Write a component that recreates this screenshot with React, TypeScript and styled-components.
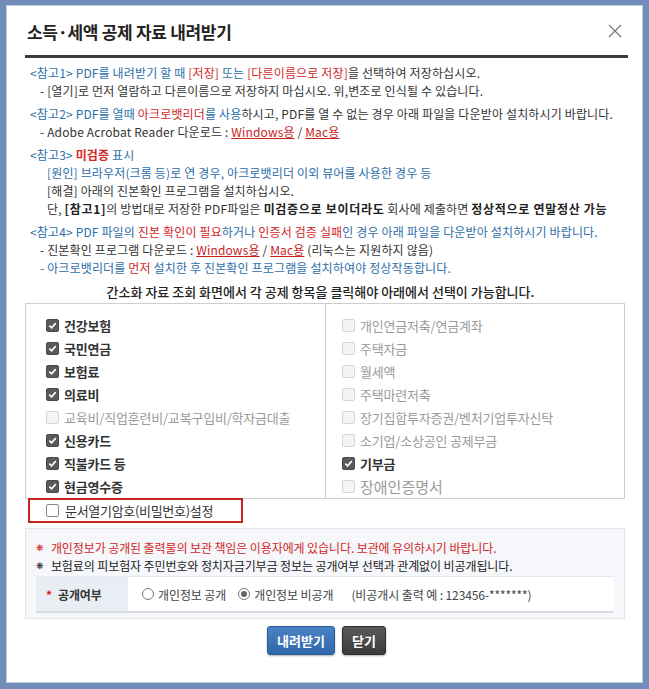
import React from "react";
import styled, { createGlobalStyle } from "styled-components";

const GlobalStyle = createGlobalStyle`
	html, body {
		margin: 0;
		padding: 0;
		background: #6f8cba;
	}
	body {
		font-family: "Noto Sans CJK KR", "Noto Sans", sans-serif;
		color: #333;
	}
`;

const Page = styled.div`
	padding: 5px 6px 6px;
	height: 689px;
	box-sizing: border-box;
`;
const Dialog = styled.div`
	height: 100%;
	box-sizing: border-box;
	background: #fff;
	border: 1px solid #c3cddb;
	padding: 0 14px 0 18px;
	display: flex;
	flex-direction: column;
`;
const Header = styled.div`
	display: flex;
	align-items: center;
	justify-content: space-between;
	height: 48px;
	padding-top: 1px;
	border-bottom: 3px solid #3b3b3b;
`;
const Title = styled.h1`
	margin: 0 0 0 2px;
	font-size: 17px;
	font-weight: 700;
	color: #222;
	letter-spacing: -0.3px;
`;
const Close = styled.button`
	border: 0;
	background: none;
	padding: 0;
	margin-right: 4px;
	width: 16px;
	height: 16px;
	cursor: pointer;
	svg { display: block; }
`;

const Notes = styled.div`
	padding: 6px 0 0 5px;
	font-size: 12px;
	line-height: 18px;
	letter-spacing: 0.15px;
	color: #333;
`;
const Group = styled.div`
	margin-top: 5px;
	&:first-child { margin-top: 0; }
`;
const Line = styled.div<{ $indent?: number }>`
	padding-left: ${(p) => p.$indent ?? 0}px;
	white-space: nowrap;
`;
const Blue = styled.span`
	color: #2c6ea9;
`;
const Red = styled.span<{ $bold?: boolean }>`
	color: #d2261f;
	font-weight: ${(p) => (p.$bold ? 700 : 400)};
`;
const Strong = styled.b`
	font-weight: 700;
	color: #222;
	letter-spacing: 0.7px;
`;
const DocLink = styled.a`
	color: #c8211d;
	text-decoration: underline;
`;

const Guide = styled.p`
	margin: 5px 0 0;
	text-align: center;
	font-size: 13px;
	font-weight: 500;
	color: #222;
	letter-spacing: 0;
	padding-right: 12px;
`;

const Panel = styled.div`
	margin: 2px 3px 0 0;
	display: grid;
	grid-template-columns: 300px 1fr;
	border: 1px solid #cfcfcf;
`;
const Column = styled.ul<{ $left?: boolean }>`
	list-style: none;
	margin: 0;
	padding: 10px 0 0 ${(p) => (p.$left ? 20 : 16)}px;
	border-right: ${(p) => (p.$left ? "1px solid #cfcfcf" : "0")};
`;
const Item = styled.li`
	display: flex;
	align-items: center;
	gap: 5px;
	height: 23px;
`;
const Box = styled.span<{ $checked?: boolean; $disabled?: boolean }>`
	flex: none;
	width: 13px;
	height: 13px;
	box-sizing: border-box;
	border-radius: 2px;
	display: flex;
	align-items: center;
	justify-content: center;
	background: ${(p) => (p.$checked ? "#5a5a5a" : p.$disabled ? "#f4f4f4" : "#fff")};
	border: 1px solid ${(p) => (p.$checked ? "#4a4a4a" : p.$disabled ? "#d6d6d6" : "#8a8a8a")};
	svg { display: block; }
`;
const Label = styled.span<{ $checked?: boolean; $big?: boolean }>`
	font-size: ${(p) => (p.$big ? 15 : 13)}px;
	font-weight: ${(p) => (p.$checked ? 700 : 400)};
	color: ${(p) => (p.$checked ? "#333" : "#9a9a9a")};
	letter-spacing: ${(p) => (p.$big ? "0" : "-0.2px")};
	white-space: nowrap;
`;

const PasswordOption = styled.label`
	align-self: flex-start;
	margin: -1px 0 0 3px;
	width: 215px;
	height: 25px;
	box-sizing: border-box;
	border: 2px solid #c9231f;
	display: flex;
	align-items: center;
	gap: 6px;
	padding-left: 16px;
	font-size: 13px;
	color: #333;
	letter-spacing: -0.3px;
`;

const Privacy = styled.div`
	margin: 5px 3px 0 0;
	background: #f5f7fa;
	border: 1px solid #e2e6ec;
	padding: 10px 10px 5px 10px;
	font-size: 12px;
	letter-spacing: -0.1px;
`;
const Warn = styled.div<{ $red?: boolean }>`
	height: 18px;
	line-height: 18px;
	white-space: nowrap;
	color: ${(p) => (p.$red ? "#d2261f" : "#222")};
	&::before {
		content: "❋";
		display: inline-block;
		vertical-align: top;
		line-height: 18px;
		font-size: 9px;
		margin-right: 7px;
	}
`;
const Row = styled.div`
	margin-top: 1px;
	display: grid;
	grid-template-columns: 92px 1fr;
	border-top: 1px solid #e4e8ef;
	border-bottom: 2px solid #d8dde5;
	height: 34px;
`;
const RowLabel = styled.div`
	background: #e9eef5;
	display: flex;
	align-items: center;
	padding-left: 10px;
	font-weight: 700;
	color: #333;
	span { color: #d2261f; margin-right: 6px; }
`;
const RowValue = styled.div`
	background: #fff;
	display: flex;
	align-items: center;
	padding-left: 14px;
	color: #444;
	font-size: 12px;
	white-space: nowrap;
`;
const Radio = styled.span<{ $on?: boolean }>`
	width: 12px;
	height: 12px;
	box-sizing: border-box;
	border-radius: 50%;
	border: 1px solid #777;
	margin-right: 4px;
	display: inline-flex;
	align-items: center;
	justify-content: center;
	&::after {
		content: "";
		width: 6px;
		height: 6px;
		border-radius: 50%;
		background: ${(p) => (p.$on ? "#666" : "transparent")};
	}
`;
const Choice = styled.span`
	display: inline-flex;
	align-items: center;
	margin-right: 12px;
`;
const Example = styled.span`
	margin-left: 6px;
	letter-spacing: -0.1px;
`;

const Actions = styled.div`
	display: flex;
	justify-content: center;
	gap: 7px;
	margin-top: 7px;
`;
const Button = styled.button<{ $variant?: "primary" | "dark" }>`
	height: 29px;
	padding: 0 9px;
	border-radius: 3px;
	font-family: inherit;
	font-size: 13px;
	font-weight: 700;
	color: #fff;
	cursor: pointer;
	border: 1px solid ${(p) => (p.$variant === "dark" ? "#2e2e2e" : "#2a5d9c")};
	background: ${(p) =>
		p.$variant === "dark"
			? "linear-gradient(#5a5a5a, #3a3a3a)"
			: "linear-gradient(#4a82c4, #2f68ab)"};
	box-shadow: 0 1px 2px rgba(0, 0, 0, 0.3);
`;

const Check = () => (
	<svg width="9" height="9" viewBox="0 0 10 10">
		<path d="M1.5 5.2 L4 7.6 L8.6 2.4" stroke="#fff" strokeWidth="1.8" fill="none" />
	</svg>
);

const left: [string, boolean][] = [
	["건강보험", true],
	["국민연금", true],
	["보험료", true],
	["의료비", true],
	["교육비/직업훈련비/교복구입비/학자금대출", false],
	["신용카드", true],
	["직불카드 등", true],
	["현금영수증", true],
];
const right: [string, boolean][] = [
	["개인연금저축/연금계좌", false],
	["주택자금", false],
	["월세액", false],
	["주택마련저축", false],
	["장기집합투자증권/벤처기업투자신탁", false],
	["소기업/소상공인 공제부금", false],
	["기부금", true],
	["장애인증명서", false],
];

function Options({ items, isLeft }: { items: [string, boolean][]; isLeft?: boolean }) {
	return (
		<Column $left={isLeft}>
			{items.map(([name, on]) => (
				<Item key={name}>
					<Box $checked={on} $disabled={!on}>{on && <Check />}</Box>
					<Label $checked={on} $big={name === "장애인증명서"}>{name}</Label>
				</Item>
			))}
		</Column>
	);
}

export default function App() {
	return (
		<>
			<GlobalStyle />
			<Page>
				<Dialog>
					<Header>
						<Title>소득·세액 공제 자료 내려받기</Title>
						<Close aria-label="닫기">
							<svg width="14" height="14" viewBox="0 0 14 14">
								<path d="M1 1 L13 13 M13 1 L1 13" stroke="#777" strokeWidth="1.2" />
							</svg>
						</Close>
					</Header>

					<Notes>
						<Group>
							<Line>
								<Blue>&lt;참고1&gt; PDF를 내려받기 할 때 </Blue>
								<Red>[저장]</Red>
								<Blue> 또는 </Blue>
								<Red>[다른이름으로 저장]</Red>을 선택하여 저장하십시오.
							</Line>
							<Line $indent={10}>
								- [열기]로 먼저 열람하고 다른이름으로 저장하지 마십시오. 위,변조로 인식될 수 있습니다.
							</Line>
						</Group>
						<Group>
							<Line>
								<Blue>&lt;참고2&gt; PDF를 열때 </Blue>
								<Red>아크로뱃리더</Red>
								<Blue>를 사용</Blue>하시고, PDF를 열 수 없는 경우 아래 파일을 다운받아 설치하시기 바랍니다.
							</Line>
							<Line $indent={10}>
								- Adobe Acrobat Reader 다운로드 : <DocLink>Windows용</DocLink> / <DocLink>Mac용</DocLink>
							</Line>
						</Group>
						<Group>
							<Line>
								<Blue>&lt;참고3&gt; </Blue>
								<Red $bold>미검증</Red>
								<Blue> 표시</Blue>
							</Line>
							<Line $indent={17}>
								<Blue>[원인] 브라우저(크롬 등)로 연 경우, 아크로뱃리더 이외 뷰어를 사용한 경우 등</Blue>
							</Line>
							<Line $indent={17}>[해결] 아래의 진본확인 프로그램을 설치하십시오.</Line>
							<Line $indent={17}>
								단, <Strong>[참고1]</Strong>의 방법대로 저장한 PDF파일은 <Strong>미검증으로 보이더라도</Strong> 회사에 제출하면{" "}
								<Strong>정상적으로 연말정산 가능</Strong>
							</Line>
						</Group>
						<Group>
							<Line>
								<Blue>&lt;참고4&gt; PDF 파일의 </Blue>
								<Red>진본 확인이 필요</Red>
								<Blue>하거나 </Blue>
								<Red>인증서 검증 실패</Red>
								<Blue>인 경우 아래 파일을 다운받아 설치하시기 바랍니다.</Blue>
							</Line>
							<Line $indent={10}>
								- 진본확인 프로그램 다운로드 : <DocLink>Windows용</DocLink> / <DocLink>Mac용</DocLink> (리눅스는 지원하지 않음)
							</Line>
							<Line $indent={10}>
								<Blue>- 아크로뱃리더를 </Blue>
								<Red>먼저</Red>
								<Blue> 설치한 후 진본확인 프로그램을 설치하여야 정상작동합니다.</Blue>
							</Line>
						</Group>
					</Notes>

					<Guide>간소화 자료 조회 화면에서 각 공제 항목을 클릭해야 아래에서 선택이 가능합니다.</Guide>

					<Panel>
						<Options items={left} isLeft />
						<Options items={right} />
					</Panel>

					<PasswordOption>
						<Box />
						문서열기암호(비밀번호)설정
					</PasswordOption>

					<Privacy>
						<Warn $red>개인정보가 공개된 출력물의 보관 책임은 이용자에게 있습니다. 보관에 유의하시기 바랍니다.</Warn>
						<Warn>보험료의 피보험자 주민번호와 정치자금기부금 정보는 공개여부 선택과 관계없이 비공개됩니다.</Warn>
						<Row>
							<RowLabel>
								<span>*</span>공개여부
							</RowLabel>
							<RowValue>
								<Choice>
									<Radio />개인정보 공개
								</Choice>
								<Choice>
									<Radio $on />개인정보 비공개
								</Choice>
								<Example>(비공개시 출력 예 : 123456-*******)</Example>
							</RowValue>
						</Row>
					</Privacy>

					<Actions>
						<Button>내려받기</Button>
						<Button $variant="dark">닫기</Button>
					</Actions>
				</Dialog>
			</Page>
		</>
	);
}
